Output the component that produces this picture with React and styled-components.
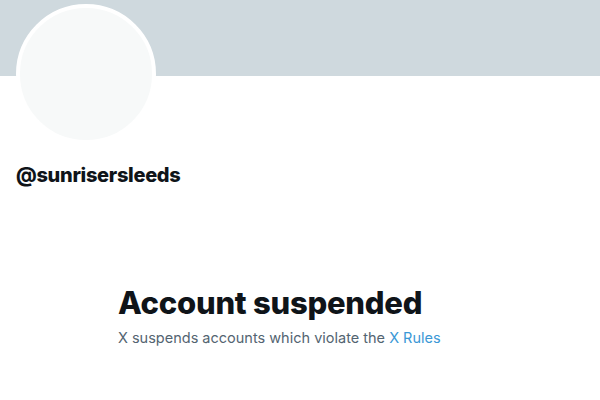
import React from "react";
import styled, { createGlobalStyle } from "styled-components";

const Global = createGlobalStyle`
  html, body { margin: 0; padding: 0; background: #ffffff; }
  body { font-family: "Inter", "Liberation Sans", sans-serif; }
`;

const Page = styled.div`
  width: 600px;
  height: 400px;
  overflow: hidden;
  background: #ffffff;
  display: flex;
  flex-direction: column;
`;

const Banner = styled.div`
  height: 76px;
  background: #cfd9de;
  flex: none;
`;

const Profile = styled.div`
  padding: 0 16px;
  display: flex;
  flex-direction: column;
`;

const Avatar = styled.div`
  width: 132px;
  height: 132px;
  margin-top: -72px;
  border: 4px solid #ffffff;
  border-radius: 50%;
  background: #f7f9f9;
  box-sizing: content-box;
`;

const Handle = styled.div`
  margin-top: 19px;
  font-size: 20px;
  line-height: 24px;
  font-weight: 800;
  color: #0f1419;
  letter-spacing: -0.3px;
`;

const Notice = styled.div`
  padding: 98px 0 0 118px;
  display: flex;
  flex-direction: column;
`;

const Title = styled.h1`
  margin: 0;
  font-size: 31px;
  line-height: 36px;
  font-weight: 800;
  color: #0f1419;
  letter-spacing: -0.25px;
`;

const Sub = styled.p`
  margin: 7px 0 0;
  font-size: 14.5px;
  line-height: 20px;
  color: #536471;
`;

const Link = styled.a`
  color: #3a98d6;
  text-decoration: none;
`;

export default function App() {
  return (
    <Page>
      <Global />
      <Banner />
      <Profile>
        <Avatar />
        <Handle>@sunrisersleeds</Handle>
      </Profile>
      <Notice>
        <Title>Account suspended</Title>
        <Sub>
          X suspends accounts which violate the <Link href="#">X Rules</Link>
        </Sub>
      </Notice>
    </Page>
  );
}
